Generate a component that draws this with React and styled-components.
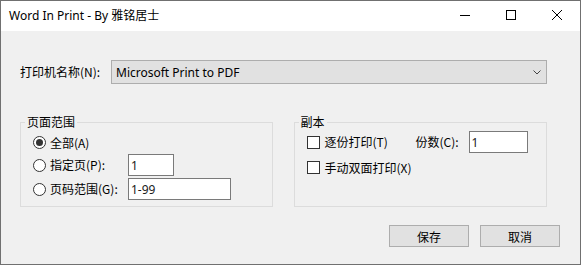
import React from "react";
import styled, { createGlobalStyle } from "styled-components";

const Global = createGlobalStyle`
  html, body { margin: 0; padding: 0; background: #f0f0f0; }
  * { box-sizing: border-box; }
`;

const cjk = `"Noto Sans CJK SC", "Noto Sans", sans-serif`;
const ui = `"Noto Sans", "Noto Sans CJK SC", sans-serif`;

const Window = styled.div`
  width: 581px;
  height: 265px;
  border: 1px solid #707070;
  display: flex;
  flex-direction: column;
  background: #f0f0f0;
`;

const TitleBar = styled.div`
  height: 30px;
  background: #ffffff;
  display: flex;
  align-items: flex-start;
`;

const Title = styled.div`
  flex: 1;
  padding-left: 8px;
  height: 28px;
  display: flex;
  align-items: center;
  font-family: ${ui};
  font-size: 12px;
  color: #000;
`;

const CtrlButton = styled.div`
  width: 46px;
  height: 28px;
  display: flex;
  align-items: center;
  justify-content: center;
`;

const Body = styled.div`
  flex: 1;
  padding: 29px 0 0 19px;
  display: flex;
  flex-direction: column;
  font-family: ${cjk};
  font-size: 12px;
  color: #000;
`;

const PrinterRow = styled.div`
  width: 527px;
  height: 24px;
  display: flex;
  align-items: center;
`;

const Label = styled.span`
  width: ${(p) => p.$w || "auto"};
  flex: none;
  white-space: nowrap;
  line-height: 16px;
`;

const Select = styled.div`
  flex: 1;
  height: 24px;
  border: 1px solid #adadad;
  background: #e1e1e1;
  display: flex;
  align-items: center;
  padding: 0 5px 0 4px;
  font-family: ${ui};
  font-size: 12px;
`;

const SelectText = styled.span`
  flex: 1;
`;

const Groups = styled.div`
  width: 527px;
  margin-top: 30px;
  display: flex;
  gap: 21px;
`;

const Group = styled.fieldset`
  margin: 0;
  padding: 0;
  width: ${(p) => p.$w}px;
  height: 93px;
  border: 1px solid #dcdcdc;
  min-width: 0;
`;

const Legend = styled.legend`
  margin-left: 4px;
  padding: 0 2px;
  font-size: 12px;
  line-height: 16px;
`;

const GroupContent = styled.div`
  padding: ${(p) => p.$top}px 0 0 12px;
  display: flex;
  flex-direction: column;
  gap: ${(p) => p.$gap}px;
`;

const Row = styled.div`
  height: ${(p) => p.$h}px;
  display: flex;
  align-items: center;
`;

const RadioCircle = styled.span`
  width: 13px;
  height: 13px;
  border: 1px solid #333;
  border-radius: 50%;
  background: #fff;
  display: flex;
  align-items: center;
  justify-content: center;
  margin-right: 4px;
  flex: none;
  &::after {
    content: "";
    width: 7px;
    height: 7px;
    border-radius: 50%;
    background: ${(p) => (p.$checked ? "#333" : "transparent")};
  }
`;

const CheckBox = styled.span`
  width: 13px;
  height: 13px;
  border: 1px solid #333;
  background: #fff;
  margin-right: 5px;
  flex: none;
`;

const TextBox = styled.div`
  width: ${(p) => p.$w}px;
  height: 22px;
  border: 1px solid #7a7a7a;
  background: #fff;
  display: flex;
  align-items: center;
  padding-left: 2px;
  font-family: ${ui};
  font-size: 12px;
  color: #1a1a1a;
`;

const Footer = styled.div`
  margin-top: 18px;
  padding-right: 20px;
  display: flex;
  justify-content: flex-end;
  gap: 11px;
`;

const Button = styled.div`
  width: 80px;
  height: 22px;
  border: 1px solid #adadad;
  background: #e1e1e1;
  display: flex;
  align-items: center;
  justify-content: center;
  font-size: 12px;
`;

export default function App() {
  return (
    <>
      <Global />
      <Window>
        <TitleBar>
          <Title>Word In Print - By 雅铭居士</Title>
          <CtrlButton>
            <svg width="10" height="10" viewBox="0 0 10 10">
              <line x1="0" y1="5.5" x2="10" y2="5.5" stroke="#000" strokeWidth="1" />
            </svg>
          </CtrlButton>
          <CtrlButton>
            <svg width="10" height="10" viewBox="0 0 10 10">
              <rect x="0.5" y="0.5" width="9" height="9" fill="none" stroke="#000" strokeWidth="1" />
            </svg>
          </CtrlButton>
          <CtrlButton>
            <svg width="10" height="10" viewBox="0 0 10 10">
              <path d="M0 0 L10 10 M10 0 L0 10" stroke="#000" strokeWidth="1" />
            </svg>
          </CtrlButton>
        </TitleBar>
        <Body>
          <PrinterRow>
            <Label $w="91px">打印机名称(N):</Label>
            <Select>
              <SelectText>Microsoft Print to PDF</SelectText>
              <svg width="8" height="5" viewBox="0 0 8 5">
                <polyline points="0.5,0.5 4,4 7.5,0.5" fill="none" stroke="#444" strokeWidth="1" />
              </svg>
            </Select>
          </PrinterRow>
          <Groups>
            <Group $w={253}>
              <Legend>页面范围</Legend>
              <GroupContent $top={3} $gap={2}>
                <Row $h={19}>
                  <RadioCircle $checked />
                  <Label>全部(A)</Label>
                </Row>
                <Row $h={22}>
                  <RadioCircle />
                  <Label $w="78px">指定页(P):</Label>
                  <TextBox $w={46}>1</TextBox>
                </Row>
                <Row $h={22}>
                  <RadioCircle />
                  <Label $w="78px">页码范围(G):</Label>
                  <TextBox $w={103}>1-99</TextBox>
                </Row>
              </GroupContent>
            </Group>
            <Group $w={254}>
              <Legend>副本</Legend>
              <GroupContent $top={1} $gap={4}>
                <Row $h={22}>
                  <CheckBox />
                  <Label $w="91px">逐份打印(T)</Label>
                  <Label $w="53px">份数(C):</Label>
                  <TextBox $w={59}>1</TextBox>
                </Row>
                <Row $h={21}>
                  <CheckBox />
                  <Label>手动双面打印(X)</Label>
                </Row>
              </GroupContent>
            </Group>
          </Groups>
          <Footer>
            <Button>保存</Button>
            <Button>取消</Button>
          </Footer>
        </Body>
      </Window>
    </>
  );
}
